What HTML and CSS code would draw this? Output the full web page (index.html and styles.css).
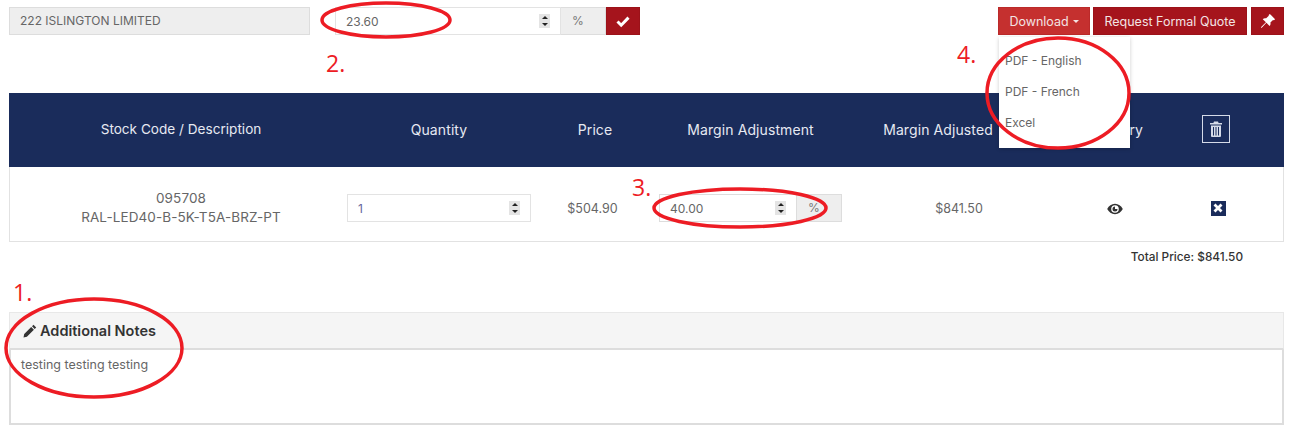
FILE: index.html
```html
<!DOCTYPE html>
<html lang="en">
<head>
    <meta charset="UTF-8">
    <title>Quote</title>
    <link rel="stylesheet" href="styles.css">
</head>
<body>
    <!-- Barra superior -->
    <div class="toolbar">
        <div class="customer">222 ISLINGTON LIMITED</div>
        <div class="margin-group">
            <div class="num-input">
                <span>23.60</span>
                <span class="spin"><i class="up"></i><i class="down"></i></span>
            </div>
            <div class="addon">%</div>
            <button class="btn btn-check">
                <svg width="14" height="14" viewBox="0 0 14 14"><path d="M1.5 7.5l3.7 3.7 7.3-7.6" fill="none" stroke="#fff" stroke-width="3"/></svg>
            </button>
        </div>
        <div class="actions">
            <div class="dropdown">
                <button class="btn btn-open">Download <b class="caret"></b></button>
                <ul class="menu">
                    <li>PDF - English</li>
                    <li>PDF - French</li>
                    <li>Excel</li>
                </ul>
            </div>
            <button class="btn btn-quote">Request Formal Quote</button>
            <button class="btn btn-pin">
                <svg width="16" height="16" viewBox="0 0 14 14"><path d="M8.6.8l4.6 4.6-1 1-.8-.3-2.3 2.3c.3 1.200 0 2.300-.7 3L5.600 8.600 1.500 12.800.8 13l.2-.7 4.200-4.100L2.400 5.400c.7-.7 1.800-1 3-.7l2.300-2.300-.1-.6z" fill="#fff"/></svg>
            </button>
        </div>
    </div>

    <!-- Tabela -->
    <div class="grid-table">
        <div class="row head">
            <div class="head-stock">Stock Code / Description</div>
            <div>Quantity</div>
            <div>Price</div>
            <div>Margin Adjustment</div>
            <div>Margin Adjusted</div>
            <div class="head-history">History</div>
            <div>
                <span class="trash-box">
                    <svg width="14" height="16" viewBox="0 0 14 16"><path d="M5 .5h4l.6 1.500H13v1.500H1V2h3.400zM2 4.500h10V15a1 1 0 0 1-1 1H3a1 1 0 0 1-1-1zm2 1.500v8.500h1V6zm2.500 0v8.500h1V6zm2.500 0v8.500h1V6z" fill="#d5dbe8"/></svg>
                </span>
            </div>
        </div>
        <div class="row body">
            <div class="stock">095708<br>RAL-LED40-B-5K-T5A-BRZ-PT</div>
            <div>
                <div class="num-input qty">
                    <span>1</span>
                    <span class="spin"><i class="up"></i><i class="down"></i></span>
                </div>
            </div>
            <div class="unit-price">$504.90</div>
            <div class="adj">
                <div class="num-input disabled">
                    <span>40.00</span>
                    <span class="spin"><i class="up"></i><i class="down"></i></span>
                </div>
                <div class="addon">%</div>
            </div>
            <div class="adj-price">$841.50</div>
            <div>
                <svg class="eye" width="16" height="12" viewBox="0 0 16 12"><path d="M8 .8C4.600.8 1.800 2.900.2 6c1.600 3.100 4.400 5.200 7.800 5.200s6.200-2.100 7.800-5.200C14.200 2.900 11.400.8 8 .8zm0 9a3.800 3.800 0 1 1 0-7.600 3.800 3.800 0 0 1 0 7.600zM8 3.500a2.500 2.500 0 1 0 2.500 2.500H8z" fill="#333"/></svg>
            </div>
            <div class="remove-cell">
                <span class="remove">
                    <svg width="10" height="10" viewBox="0 0 10 10"><path d="M1.500 1.500l7 7m0-7l-7 7" stroke="#fff" stroke-width="2.800"/></svg>
                </span>
            </div>
        </div>
    </div>

    <div class="total">Total Price: $841.50</div>

    <!-- Notas -->
    <div class="notes">
        <div class="notes-head">
            <svg width="14" height="14" viewBox="0 0 14 14"><path d="M10.500.8l2.700 2.700-1.500 1.500L9 2.300zM8.200 3.100l2.700 2.700-7 7-3.400.7.700-3.400z" fill="#333"/></svg>
            Additional Notes
        </div>
        <div class="notes-box">testing testing testing</div>
    </div>

    <!-- Anotações em vermelho -->
    <svg class="marks" width="1300" height="425">
        <g fill="none" stroke="#ed1c24" stroke-width="3.500">
            <ellipse cx="94" cy="348" rx="88" ry="49"/>
            <ellipse cx="386" cy="20" rx="64" ry="17"/>
            <ellipse cx="740" cy="208" rx="86" ry="19"/>
            <ellipse cx="1058" cy="93" rx="71" ry="55"/>
        </g>
    </svg>
    <span class="mark-num n1">1.</span>
    <span class="mark-num n2">2.</span>
    <span class="mark-num n3">3.</span>
    <span class="mark-num n4">4.</span>
</body>
</html>
```
FILE: styles.css
```css
html, body {
    height: 425px;
    overflow: hidden;
}

body {
    position: relative;
    margin: 0;
    padding: 7px 16px 0 9px;
    box-sizing: border-box;
    font-family: Inter, "Liberation Sans", sans-serif;
    font-size: 13.500px;
    color: #666;
    background-color: #fff;
}

.toolbar {
    display: flex;
    height: 28px;
}

.customer {
    width: 301px;
    box-sizing: border-box;
    padding-left: 10px;
    line-height: 26px;
    font-size: 12px;
    background-color: #eee;
    border: 1px solid #ddd;
}

.margin-group {
    display: flex;
    margin-left: 25px;
    width: 305px;
}

.num-input {
    display: flex;
    flex: 1;
    align-items: center;
    justify-content: space-between;
    box-sizing: border-box;
    padding: 0 10px;
    height: 28px;
    font-size: 12px;
    background-color: #fff;
    border: 1px solid #e3e3e3;
}

.spin {
    display: flex;
    flex-direction: column;
    justify-content: space-around;
    align-items: center;
    width: 11px;
    height: 14px;
    background-color: #e4e4e4;
}

.spin i {
    display: block;
    border-left: 3px solid transparent;
    border-right: 3px solid transparent;
}

.spin .up {
    border-bottom: 3px solid #222;
}

.spin .down {
    border-top: 3px solid #222;
}

.addon {
    width: 45px;
    box-sizing: border-box;
    padding-left: 11px;
    line-height: 26px;
    font-size: 12px;
    color: #777;
    background-color: #eee;
    border: 1px solid #ddd;
    border-left: none;
}

.btn {
    height: 28px;
    padding: 0;
    display: flex;
    align-items: center;
    justify-content: center;
    font-family: inherit;
    font-size: 12.500px;
    color: #f3e3e3;
    background-color: #a5141c;
    border: 1px solid #9c1219;
}

.btn-check {
    width: 34px;
}

.actions {
    display: flex;
    margin-left: auto;
    gap: 3px;
}

.dropdown {
    position: relative;
}

.btn-open {
    width: 92px;
    gap: 4px;
    background-color: #c5302f;
    border-color: #bb2a2a;
}

.caret {
    border-left: 3.500px solid transparent;
    border-right: 3.500px solid transparent;
    border-top: 3.500px solid #f3e3e3;
}

.btn-quote {
    width: 154px;
}

.btn-pin {
    width: 33px;
    margin-left: 1px;
}

.menu {
    position: absolute;
    top: 30px;
    left: 1px;
    z-index: 5;
    width: 131px;
    height: 111px;
    box-sizing: border-box;
    margin: 0;
    padding: 8px 0 0 6px;
    list-style: none;
    font-size: 12px;
    line-height: 31px;
    background-color: #fff;
    box-shadow: 0 1px 4px rgba(0, 0, 0, 0.2);
}

.grid-table {
    margin-top: 58px;
}

.row {
    display: grid;
    grid-template-columns: 337px 184px 128px 183px 192px 162px 40px;
    padding-left: 1px;
    align-items: center;
    text-align: center;
}

.row > div:first-child {
    padding-left: 5px;
}

.head {
    height: 74px;
    font-size: 14px;
    letter-spacing: 0.1px;
    color: #e6e9f2;
    background-color: #1a2c5b;
}

.head > div {
    padding-bottom: 2px;
}

.head .head-stock {
    font-size: 13.600px;
    letter-spacing: 0;
}

.head-history {
    padding-left: 8px;
}

.trash-box {
    display: inline-flex;
    align-items: center;
    justify-content: center;
    width: 28px;
    height: 28px;
    border: 1px solid #d5dbe8;
    box-sizing: border-box;
    vertical-align: middle;
}

.body {
    height: 75px;
    box-sizing: border-box;
    border: 1px solid #e2e2e2;
    border-top: none;
    padding-top: 8px;
    padding-left: 0;
}

.stock {
    line-height: 19px;
    letter-spacing: 0.1px;
}

.qty {
    text-align: left;
    color: #66669a;
}

.unit-price {
    padding-right: 5px;
    font-size: 12.500px;
}

.disabled {
    background-color: #eee;
    border-color: #ddd;
}

.adj {
    display: flex;
}

.adj .num-input {
    flex: 1;
    background-color: #fff;
}

.adj .addon {
    text-align: left;
}

.adj-price {
    padding-left: 42px;
    font-size: 12.500px;
}

.eye {
    display: inline-block;
    vertical-align: middle;
}

.remove-cell {
    padding-left: 4px;
}

.remove {
    display: inline-flex;
    align-items: center;
    justify-content: center;
    width: 15px;
    height: 15px;
    background-color: #1a2c5b;
}

.total {
    margin-top: 8px;
    padding-right: 41px;
    text-align: right;
    font-size: 11.800px;
    font-weight: 500;
    color: #333;
}

.notes {
    margin-top: 48px;
}

.notes-head {
    display: flex;
    align-items: center;
    gap: 3px;
    box-sizing: border-box;
    height: 38px;
    padding-left: 13px;
    font-size: 14.500px;
    font-weight: 600;
    color: #333;
    background-color: #f5f5f5;
    border: 1px solid #e8e8e8;
    border-bottom: 2px solid #ddd;
}

.notes-box {
    box-sizing: border-box;
    height: 75px;
    padding: 7px 10px;
    font-size: 12.500px;
    border: 2px solid #ddd;
    border-top: none;
}

.marks {
    position: absolute;
    top: 0;
    left: 0;
    z-index: 10;
    pointer-events: none;
}

.mark-num {
    position: absolute;
    z-index: 10;
    font-family: "Open Sans", sans-serif;
    font-size: 23px;
    line-height: 26px;
    color: #ed1c24;
}

.n1 {
    left: 13px;
    top: 279px;
}

.n2 {
    left: 326px;
    top: 50px;
}

.n3 {
    left: 632px;
    top: 174px;
}

.n4 {
    left: 957px;
    top: 41px;
}
```
